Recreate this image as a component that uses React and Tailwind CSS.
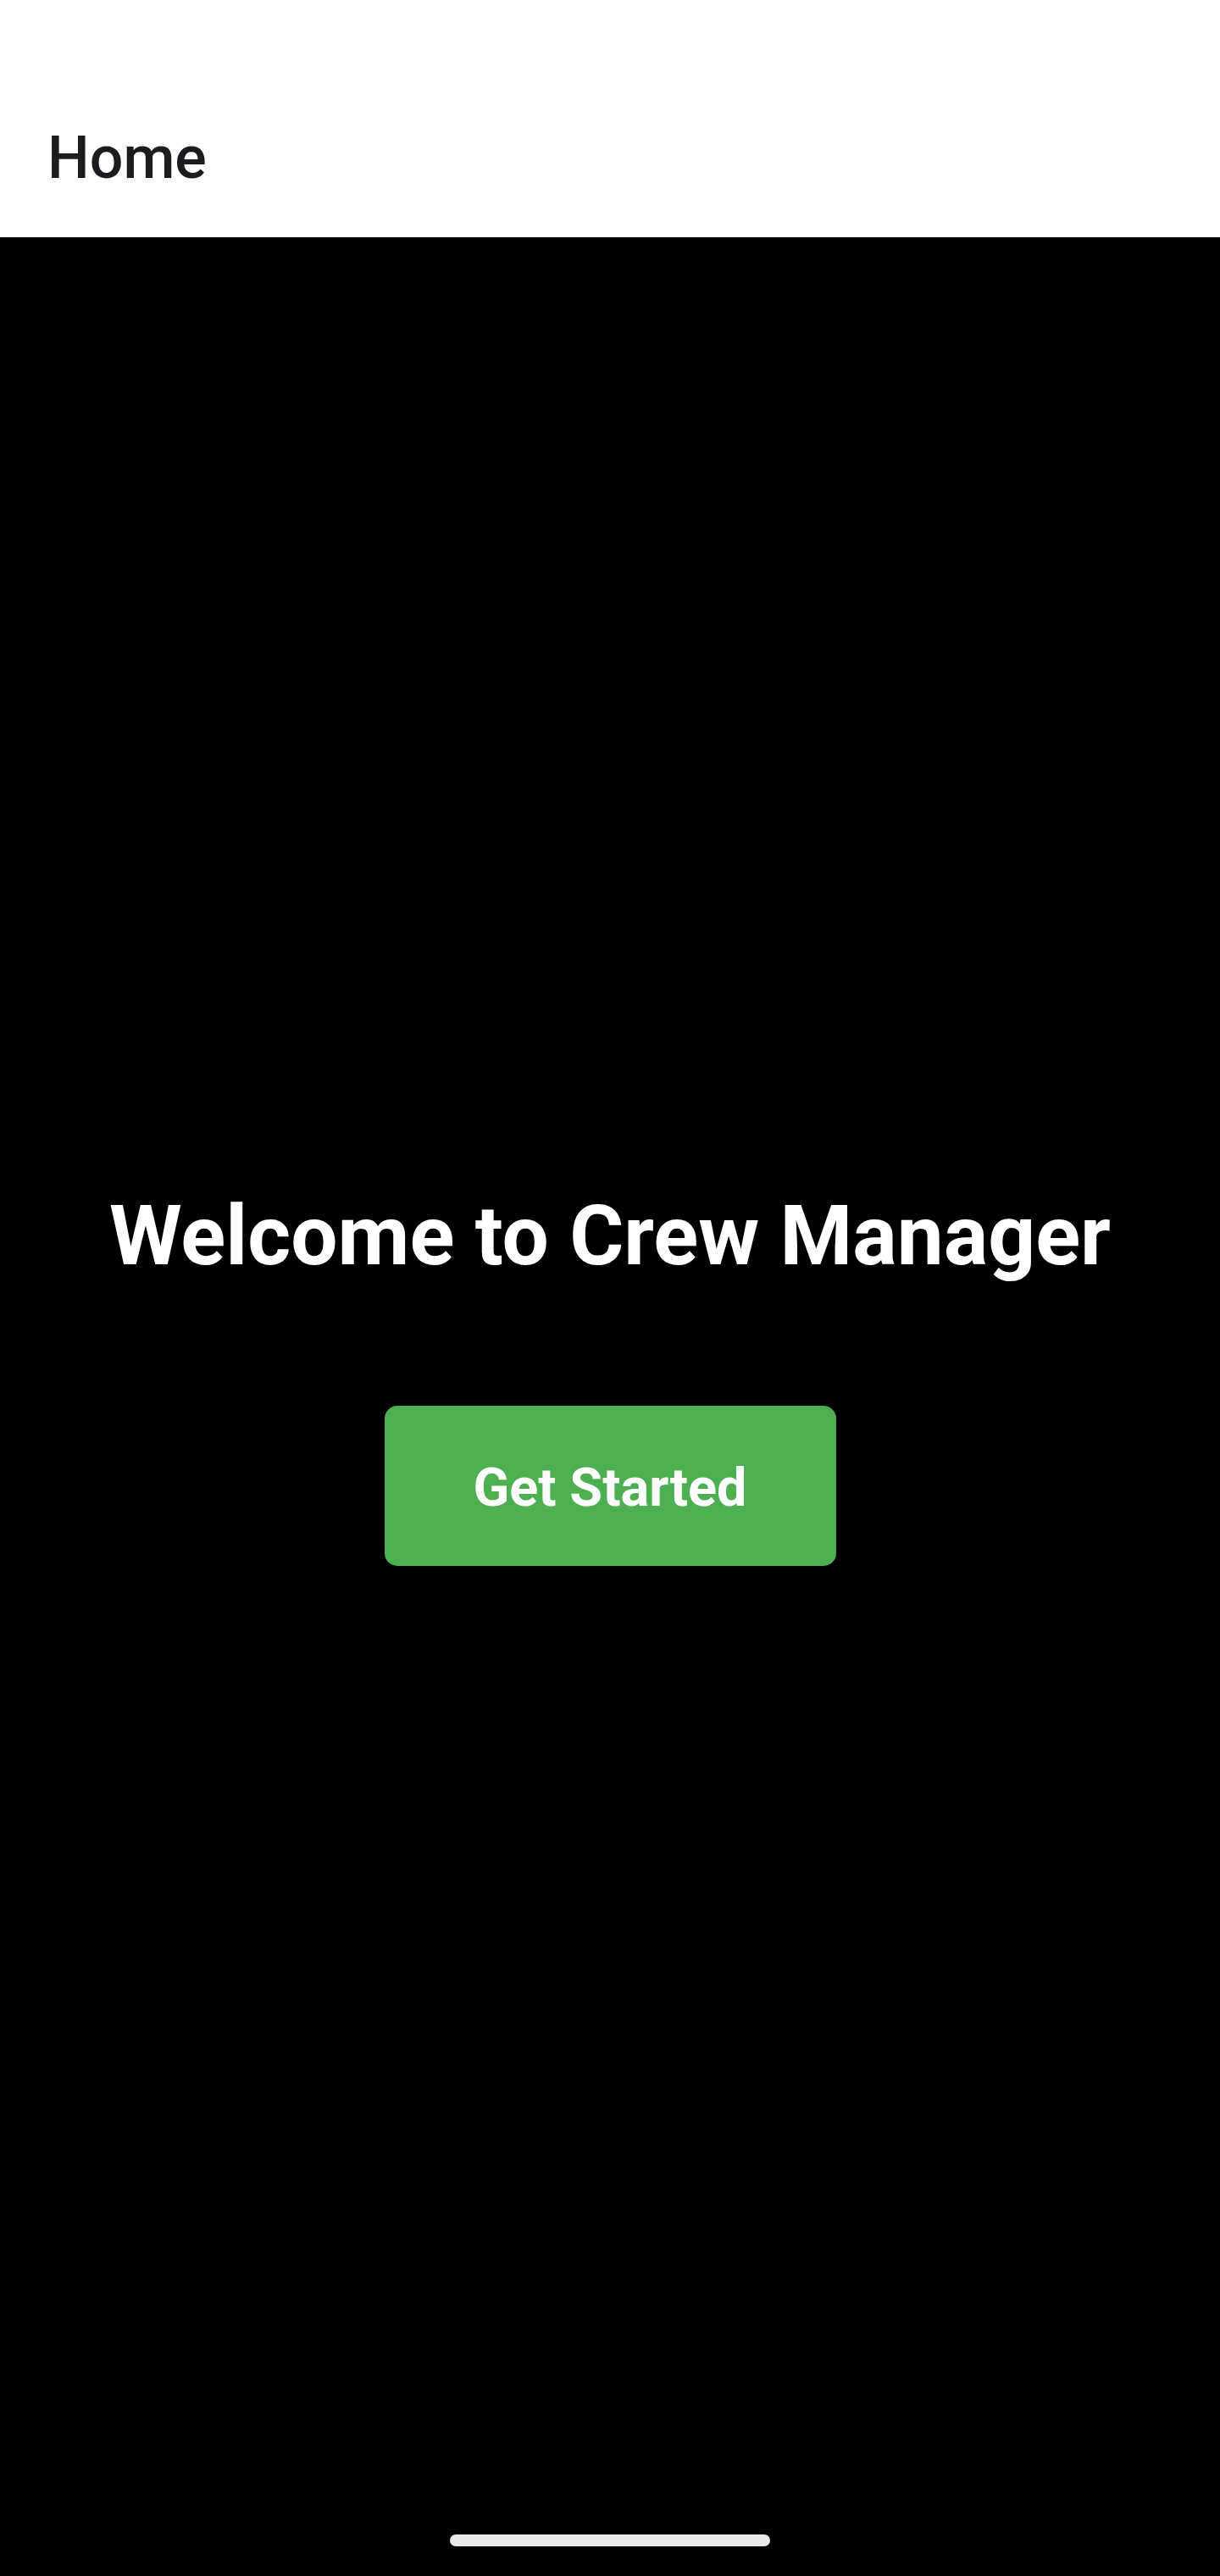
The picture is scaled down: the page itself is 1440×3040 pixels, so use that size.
import React from 'react';

const font = { fontFamily: 'Roboto, "Noto Sans", sans-serif' };

export default function App() {
  return (
    <div className="w-[1440px] h-[3040px] flex flex-col bg-black" style={font}>
      {/* App bar */}
      <header className="h-[280px] bg-white pl-[56px] pt-[145px] shrink-0">
        <h1 className="text-[70px] leading-[82px] font-medium text-[#1c1b1f]">Home</h1>
      </header>

      {/* Welcome content */}
      <main className="flex-1 flex flex-col items-center justify-center pb-[22px]">
        <h2 className="text-[98px] leading-[115px] font-bold text-white">Welcome to Crew Manager</h2>
        <button className="mt-[143px] w-[533px] h-[189px] pt-[6px] rounded-[15px] bg-[#4caf50] text-white text-[63px] font-bold flex items-center justify-center">
          Get Started
        </button>
      </main>

      {/* Gesture bar */}
      <footer className="h-[49px] shrink-0 flex justify-center">
        <div className="w-[378px] h-[14px] rounded-full bg-[#e8e8e8]"></div>
      </footer>
    </div>
  );
}
